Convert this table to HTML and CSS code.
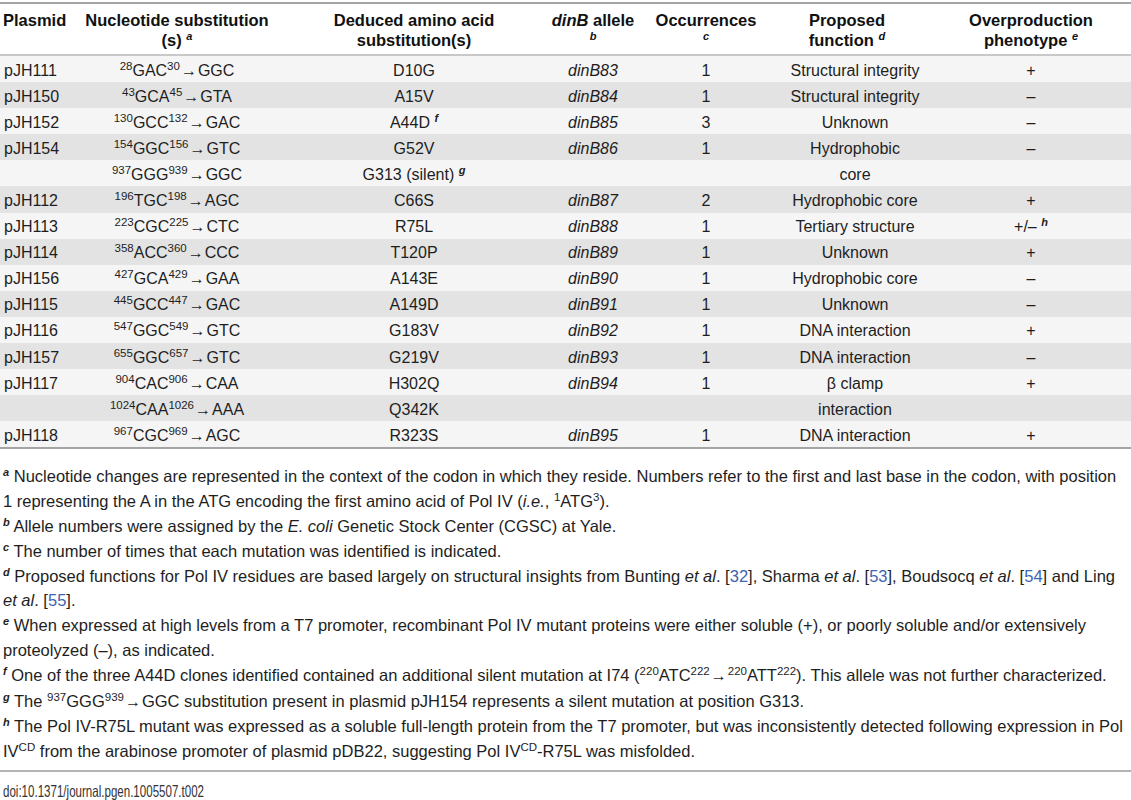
FILE: index.html
```html
<!DOCTYPE html>
<html lang="en">
<head>
  <meta charset="UTF-8" />
  <title>Table 2. dinB alleles</title>
  <link rel="stylesheet" href="styles.css">
</head>
<body>
  <table class="data-table">
    <colgroup>
      <col class="c-plasmid">
      <col class="c-nuc">
      <col class="c-aa">
      <col class="c-allele">
      <col class="c-occ">
      <col class="c-func">
      <col class="c-pheno">
    </colgroup>
    <thead>
      <tr>
        <th class="left">Plasmid</th>
        <th>Nucleotide substitution<br>(s) <sup class="fn">a</sup></th>
        <th>Deduced amino acid<br>substitution(s)</th>
        <th><i>dinB</i> allele<br><sup class="fn">b</sup></th>
        <th>Occurrences<br><sup class="fn">c</sup></th>
        <th class="func-head">Proposed<br>function <sup class="fn">d</sup></th>
        <th class="pheno">Overproduction<br>phenotype <sup class="fn">e</sup></th>
      </tr>
    </thead>
    <tbody>
      <tr>
        <td class="left">pJH111</td>
        <td><sup>28</sup>GAC<sup>30</sup><span class="arr">→</span>GGC</td>
        <td>D10G</td>
        <td><i>dinB83</i></td>
        <td>1</td>
        <td>Structural integrity</td>
        <td class="pheno">+</td>
      </tr>
      <tr>
        <td class="left">pJH150</td>
        <td><sup>43</sup>GCA<sup>45</sup><span class="arr">→</span>GTA</td>
        <td>A15V</td>
        <td><i>dinB84</i></td>
        <td>1</td>
        <td>Structural integrity</td>
        <td class="pheno">–</td>
      </tr>
      <tr>
        <td class="left">pJH152</td>
        <td><sup>130</sup>GCC<sup>132</sup><span class="arr">→</span>GAC</td>
        <td>A44D <sup class="fn">f</sup></td>
        <td><i>dinB85</i></td>
        <td>3</td>
        <td>Unknown</td>
        <td class="pheno">–</td>
      </tr>
      <tr>
        <td class="left">pJH154</td>
        <td><sup>154</sup>GGC<sup>156</sup><span class="arr">→</span>GTC</td>
        <td>G52V</td>
        <td><i>dinB86</i></td>
        <td>1</td>
        <td>Hydrophobic</td>
        <td class="pheno">–</td>
      </tr>
      <tr>
        <td class="left"></td>
        <td><sup>937</sup>GGG<sup>939</sup><span class="arr">→</span>GGC</td>
        <td>G313 (silent) <sup class="fn">g</sup></td>
        <td></td>
        <td></td>
        <td>core</td>
        <td class="pheno"></td>
      </tr>
      <tr>
        <td class="left">pJH112</td>
        <td><sup>196</sup>TGC<sup>198</sup><span class="arr">→</span>AGC</td>
        <td>C66S</td>
        <td><i>dinB87</i></td>
        <td>2</td>
        <td>Hydrophobic core</td>
        <td class="pheno">+</td>
      </tr>
      <tr>
        <td class="left">pJH113</td>
        <td><sup>223</sup>CGC<sup>225</sup><span class="arr">→</span>CTC</td>
        <td>R75L</td>
        <td><i>dinB88</i></td>
        <td>1</td>
        <td>Tertiary structure</td>
        <td class="pheno">+/– <sup class="fn">h</sup></td>
      </tr>
      <tr>
        <td class="left">pJH114</td>
        <td><sup>358</sup>ACC<sup>360</sup><span class="arr">→</span>CCC</td>
        <td>T120P</td>
        <td><i>dinB89</i></td>
        <td>1</td>
        <td>Unknown</td>
        <td class="pheno">+</td>
      </tr>
      <tr>
        <td class="left">pJH156</td>
        <td><sup>427</sup>GCA<sup>429</sup><span class="arr">→</span>GAA</td>
        <td>A143E</td>
        <td><i>dinB90</i></td>
        <td>1</td>
        <td>Hydrophobic core</td>
        <td class="pheno">–</td>
      </tr>
      <tr>
        <td class="left">pJH115</td>
        <td><sup>445</sup>GCC<sup>447</sup><span class="arr">→</span>GAC</td>
        <td>A149D</td>
        <td><i>dinB91</i></td>
        <td>1</td>
        <td>Unknown</td>
        <td class="pheno">–</td>
      </tr>
      <tr>
        <td class="left">pJH116</td>
        <td><sup>547</sup>GGC<sup>549</sup><span class="arr">→</span>GTC</td>
        <td>G183V</td>
        <td><i>dinB92</i></td>
        <td>1</td>
        <td>DNA interaction</td>
        <td class="pheno">+</td>
      </tr>
      <tr>
        <td class="left">pJH157</td>
        <td><sup>655</sup>GGC<sup>657</sup><span class="arr">→</span>GTC</td>
        <td>G219V</td>
        <td><i>dinB93</i></td>
        <td>1</td>
        <td>DNA interaction</td>
        <td class="pheno">–</td>
      </tr>
      <tr>
        <td class="left">pJH117</td>
        <td><sup>904</sup>CAC<sup>906</sup><span class="arr">→</span>CAA</td>
        <td>H302Q</td>
        <td><i>dinB94</i></td>
        <td>1</td>
        <td>β clamp</td>
        <td class="pheno">+</td>
      </tr>
      <tr>
        <td class="left"></td>
        <td><sup>1024</sup>CAA<sup>1026</sup><span class="arr">→</span>AAA</td>
        <td>Q342K</td>
        <td></td>
        <td></td>
        <td>interaction</td>
        <td class="pheno"></td>
      </tr>
      <tr>
        <td class="left">pJH118</td>
        <td><sup>967</sup>CGC<sup>969</sup><span class="arr">→</span>AGC</td>
        <td>R323S</td>
        <td><i>dinB95</i></td>
        <td>1</td>
        <td>DNA interaction</td>
        <td class="pheno">+</td>
      </tr>
    </tbody>
  </table>

  <!-- footnotes -->
  <div class="notes">
    <p><sup class="fn">a</sup> Nucleotide changes are represented in the context of the codon in which they reside. Numbers refer to the first and last base in the codon, with position<br>1 representing the A in the ATG encoding the first amino acid of Pol IV (<i>i.e.</i>, <sup>1</sup>ATG<sup>3</sup>).</p>
    <p><sup class="fn">b</sup> Allele numbers were assigned by the <i>E. coli</i> Genetic Stock Center (CGSC) at Yale.</p>
    <p><sup class="fn">c</sup> The number of times that each mutation was identified is indicated.</p>
    <p><sup class="fn">d</sup> Proposed functions for Pol IV residues are based largely on structural insights from Bunting <i>et al</i>. [<a href="#">32</a>], Sharma <i>et al</i>. [<a href="#">53</a>], Boudsocq <i>et al</i>. [<a href="#">54</a>] and Ling<br><i>et al</i>. [<a href="#">55</a>].</p>
    <p><sup class="fn">e</sup> When expressed at high levels from a T7 promoter, recombinant Pol IV mutant proteins were either soluble (+), or poorly soluble and/or extensively<br>proteolyzed (–), as indicated.</p>
    <p><sup class="fn">f</sup> One of the three A44D clones identified contained an additional silent mutation at I74 (<sup>220</sup>ATC<sup>222</sup><span class="arr">→</span><sup>220</sup>ATT<sup>222</sup>). This allele was not further characterized.</p>
    <p><sup class="fn">g</sup> The <sup>937</sup>GGG<sup>939</sup><span class="arr">→</span>GGC substitution present in plasmid pJH154 represents a silent mutation at position G313.</p>
    <p><sup class="fn">h</sup> The Pol IV-R75L mutant was expressed as a soluble full-length protein from the T7 promoter, but was inconsistently detected following expression in Pol<br>IV<sup>CD</sup> from the arabinose promoter of plasmid pDB22, suggesting Pol IV<sup>CD</sup>-R75L was misfolded.</p>
  </div>

  <div class="doi"><span class="doi-text">doi:10.1371/journal.pgen.1005507.t002</span></div>
</body>
</html>
```

FILE: styles.css
```css
body {
  font-family: "Liberation Sans", Arial, sans-serif;
  font-size: 16px;
  color: #1e1e1e;
  background-color: #fff;
  margin: 0;
  padding-top: 2px;
}

sup {
  font-size: 11.5px;
  line-height: 0;
  vertical-align: 6px;
}

sup.fn {
  font-weight: bold;
  font-style: italic;
  font-size: 11px;
}

.arr {
  font-size: 16px;
  margin: 0 1px;
}

.data-table {
  width: 1131px;
  border-collapse: collapse;
  table-layout: fixed;
  border-top: 2px solid #a4a4a4;
  border-bottom: 2px solid #a4a4a4;
}

.c-plasmid { width: 72px; }
.c-nuc { width: 210px; }
.c-aa { width: 264px; }
.c-allele { width: 94px; }
.c-occ { width: 132px; }
.c-func { width: 166px; }
.c-pheno { width: 193px; }

th {
  font-size: 16.5px;
  font-weight: bold;
  color: #111;
  line-height: 19.5px;
  vertical-align: top;
  text-align: center;
  padding: 7px 4px 4px 4px;
  border-bottom: 2px solid #c8c8c8;
}

td {
  height: 23.1px;
  line-height: 18px;
  text-align: center;
  white-space: nowrap;
  padding: 3px 4px 0 4px;
}

th.left,
td.left {
  text-align: left;
  padding-left: 4px;
}

th.left {
  padding-left: 3px;
}

.func-head {
  padding-right: 20px;
}

.pheno {
  padding-right: 11px;
}

tbody tr:nth-child(odd) {
  background-color: #f5f5f5;
}

tbody tr:nth-child(even) {
  background-color: #e3e3e3;
}

.notes {
  margin-top: 15px;
  padding: 0 3px 6px 3px;
  font-size: 16.5px;
  border-bottom: 2px solid #b4b4b4;
}

.notes p {
  margin: 0;
  line-height: 24.8px;
}

.notes a {
  color: #3e64ad;
  text-decoration: none;
}

.doi {
  margin-top: 9px;
  padding-left: 3px;
  font-size: 16.5px;
  line-height: 20px;
  color: #333;
}

.doi-text {
  display: inline-block;
  transform: scaleX(0.7);
  transform-origin: left center;
}
```
